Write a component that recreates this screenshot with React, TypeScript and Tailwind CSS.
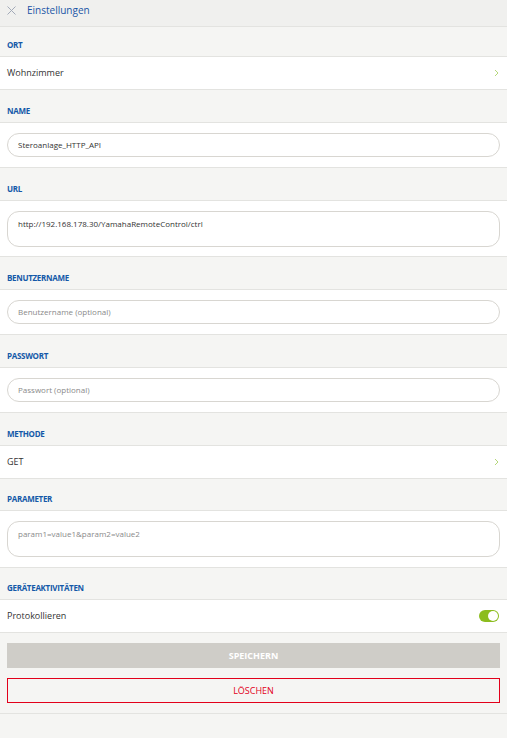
import React from "react";

const font = { fontFamily: '"Open Sans", "Liberation Sans", sans-serif' };

function Label({ children, h }: { children: React.ReactNode; h: string }) {
  return (
    <div className={`flex items-end px-[7px] pb-[7px] border-b border-[#e3e3e0] bg-[#f5f5f3] ${h}`}>
      <span className="text-[8px] font-bold text-[#1459a8] leading-none tracking-[-0.3px]">{children}</span>
    </div>
  );
}

function Chevron() {
  return (
    <svg width="5" height="8" viewBox="0 0 5 8" className="mr-[8px]">
      <path d="M1 1 L4 4 L1 7" fill="none" stroke="#b5d77a" strokeWidth="1" />
    </svg>
  );
}

function SelectRow({ children }: { children: React.ReactNode }) {
  return (
    <div className="h-[33px] flex items-center justify-between pl-[7px] bg-white border-b border-[#e3e3e0]">
      <span className="text-[9px] text-[#333333]">{children}</span>
      <Chevron />
    </div>
  );
}

function InputRow({ value, placeholder }: { value?: string; placeholder?: string }) {
  return (
    <div className="h-[45px] px-[7px] pt-[10px] bg-white border-b border-[#e3e3e0]">
      <div className="h-[24px] rounded-full border border-[#d8d6d1] flex items-center px-[10px]">
        {value ? (
          <span className="text-[8px] text-[#333333]">{value}</span>
        ) : (
          <span className="text-[8px] text-[#8a8a8a]">{placeholder}</span>
        )}
      </div>
    </div>
  );
}

function TextAreaRow({ value, muted, h }: { value: string; muted?: boolean; h: string }) {
  return (
    <div className={`${h} px-[7px] pt-[10px] bg-white border-b border-[#e3e3e0]`}>
      <div
        className={`h-[36px] rounded-[12px] border border-[#d8d6d1] px-[10px] pt-[7px] text-[8px] leading-[10px] ${
          muted ? "text-[#8a8a8a]" : "text-[#333333]"
        }`}
      >
        {value}
      </div>
    </div>
  );
}

export default function App() {
  return (
    <div className="w-[507px] h-[738px] bg-[#f5f5f3] overflow-hidden" style={font}>
      <div className="h-[27px] flex items-center pb-[6px] bg-[#f0f0ee] border-b border-[#e3e3e0]">
        <svg width="9" height="9" viewBox="0 0 9 9" className="ml-[7px] mr-[11px]">
          <path d="M0.5 0.5 L8.5 8.5 M8.5 0.5 L0.5 8.5" stroke="#a3aab8" strokeWidth="1" />
        </svg>
        <span className="text-[10px] text-[#1a55a6] leading-none">Einstellungen</span>
      </div>
      <Label h="h-[30px]">ORT</Label>
      <SelectRow>Wohnzimmer</SelectRow>
      <Label h="h-[33px]">NAME</Label>
      <InputRow value="Steroanlage_HTTP_API" />
      <Label h="h-[33px]">URL</Label>
      <TextAreaRow h="h-[56px]" value="http://192.168.178.30/YamahaRemoteControl/ctrl" />
      <Label h="h-[33px]">BENUTZERNAME</Label>
      <InputRow placeholder="Benutzername (optional)" />
      <Label h="h-[33px]">PASSWORT</Label>
      <InputRow placeholder="Passwort (optional)" />
      <Label h="h-[33px]">METHODE</Label>
      <SelectRow>GET</SelectRow>
      <Label h="h-[32px]">PARAMETER</Label>
      <TextAreaRow h="h-[57px]" value="param1=value1&param2=value2" muted />
      <Label h="h-[32px]">GERÄTEAKTIVITÄTEN</Label>
      <div className="h-[33px] flex items-center justify-between pl-[7px] pr-[8px] bg-white border-b border-[#e3e3e0]">
        <span className="text-[9px] text-[#333333]">Protokollieren</span>
        <div className="w-[20px] h-[12px] rounded-full bg-[#8cbd1e] flex items-center justify-end pr-[1px]">
          <div className="w-[10px] h-[10px] rounded-full bg-white" />
        </div>
      </div>
      <div className="px-[7px] pt-[10px] pb-[10px] flex flex-col gap-[10px] border-b border-[#e3e3e0]">
        <div className="h-[25px] bg-[#cfcdc8] flex items-center justify-center">
          <span className="text-[9px] font-bold text-white">SPEICHERN</span>
        </div>
        <div className="h-[25px] border border-solid border-[color:#e2001a] flex items-center justify-center">
          <span className="text-[9px] text-[#e2001a]">LÖSCHEN</span>
        </div>
      </div>
    </div>
  );
}
